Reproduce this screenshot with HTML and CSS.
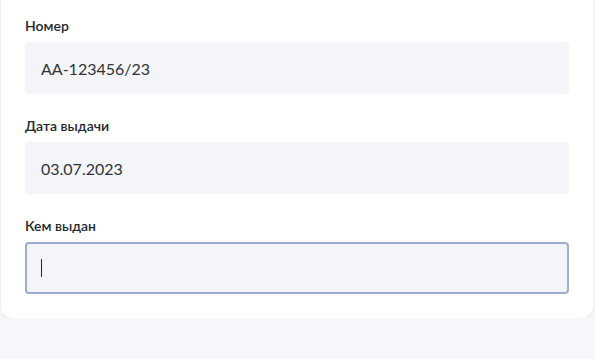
FILE: index.html
```html
<!DOCTYPE html>
<html lang="ru">
  <head>
    <meta charset="UTF-8" />
    <meta name="viewport" content="width=device-width, initial-scale=1.0" />
    <title>Документ</title>
    <link rel="stylesheet" href="styles.css">
  </head>
  <body>
    <main class="card">
      <div class="field">
        <div class="label">Номер</div>
        <div class="input">AA-123456/23</div>
      </div>
      <div class="field">
        <div class="label">Дата выдачи</div>
        <div class="input">03.07.2023</div>
      </div>
      <div class="field">
        <div class="label">Кем выдан</div>
        <div class="input focused"><span class="caret"></span></div>
      </div>
    </main>
  </body>
</html>
```

FILE: styles.css
```css
* {
  box-sizing: border-box;
}
body {
  margin: 0;
  padding: 0;
  background-color: #f5f7fb;
  font-family: Lato, "Noto Sans", sans-serif;
  color: #222;
}
.card {
  width: 592px;
  margin-left: 1px;
  padding: 18px 24px 24px;
  background-color: #fffffd;
  border-radius: 0 0 12px 12px;
  box-shadow: 0 1px 4px rgba(120, 135, 170, 0.12);
  display: flex;
  flex-direction: column;
  gap: 24px;
}
.field {
  display: flex;
  flex-direction: column;
  gap: 8px;
}
.label {
  font-size: 14px;
  line-height: 16px;
  font-weight: 600;
  color: #22262e;
}
.input {
  height: 52px;
  padding: 0 16px;
  display: flex;
  align-items: center;
  background-color: #f3f5f9;
  border-radius: 4px;
  font-size: 16px;
  color: #30343a;
}
.input.focused {
  border: 2px solid #9dadd3;
  padding: 0 14px;
}
.caret {
  width: 1px;
  height: 18px;
  background-color: #222;
}
```
